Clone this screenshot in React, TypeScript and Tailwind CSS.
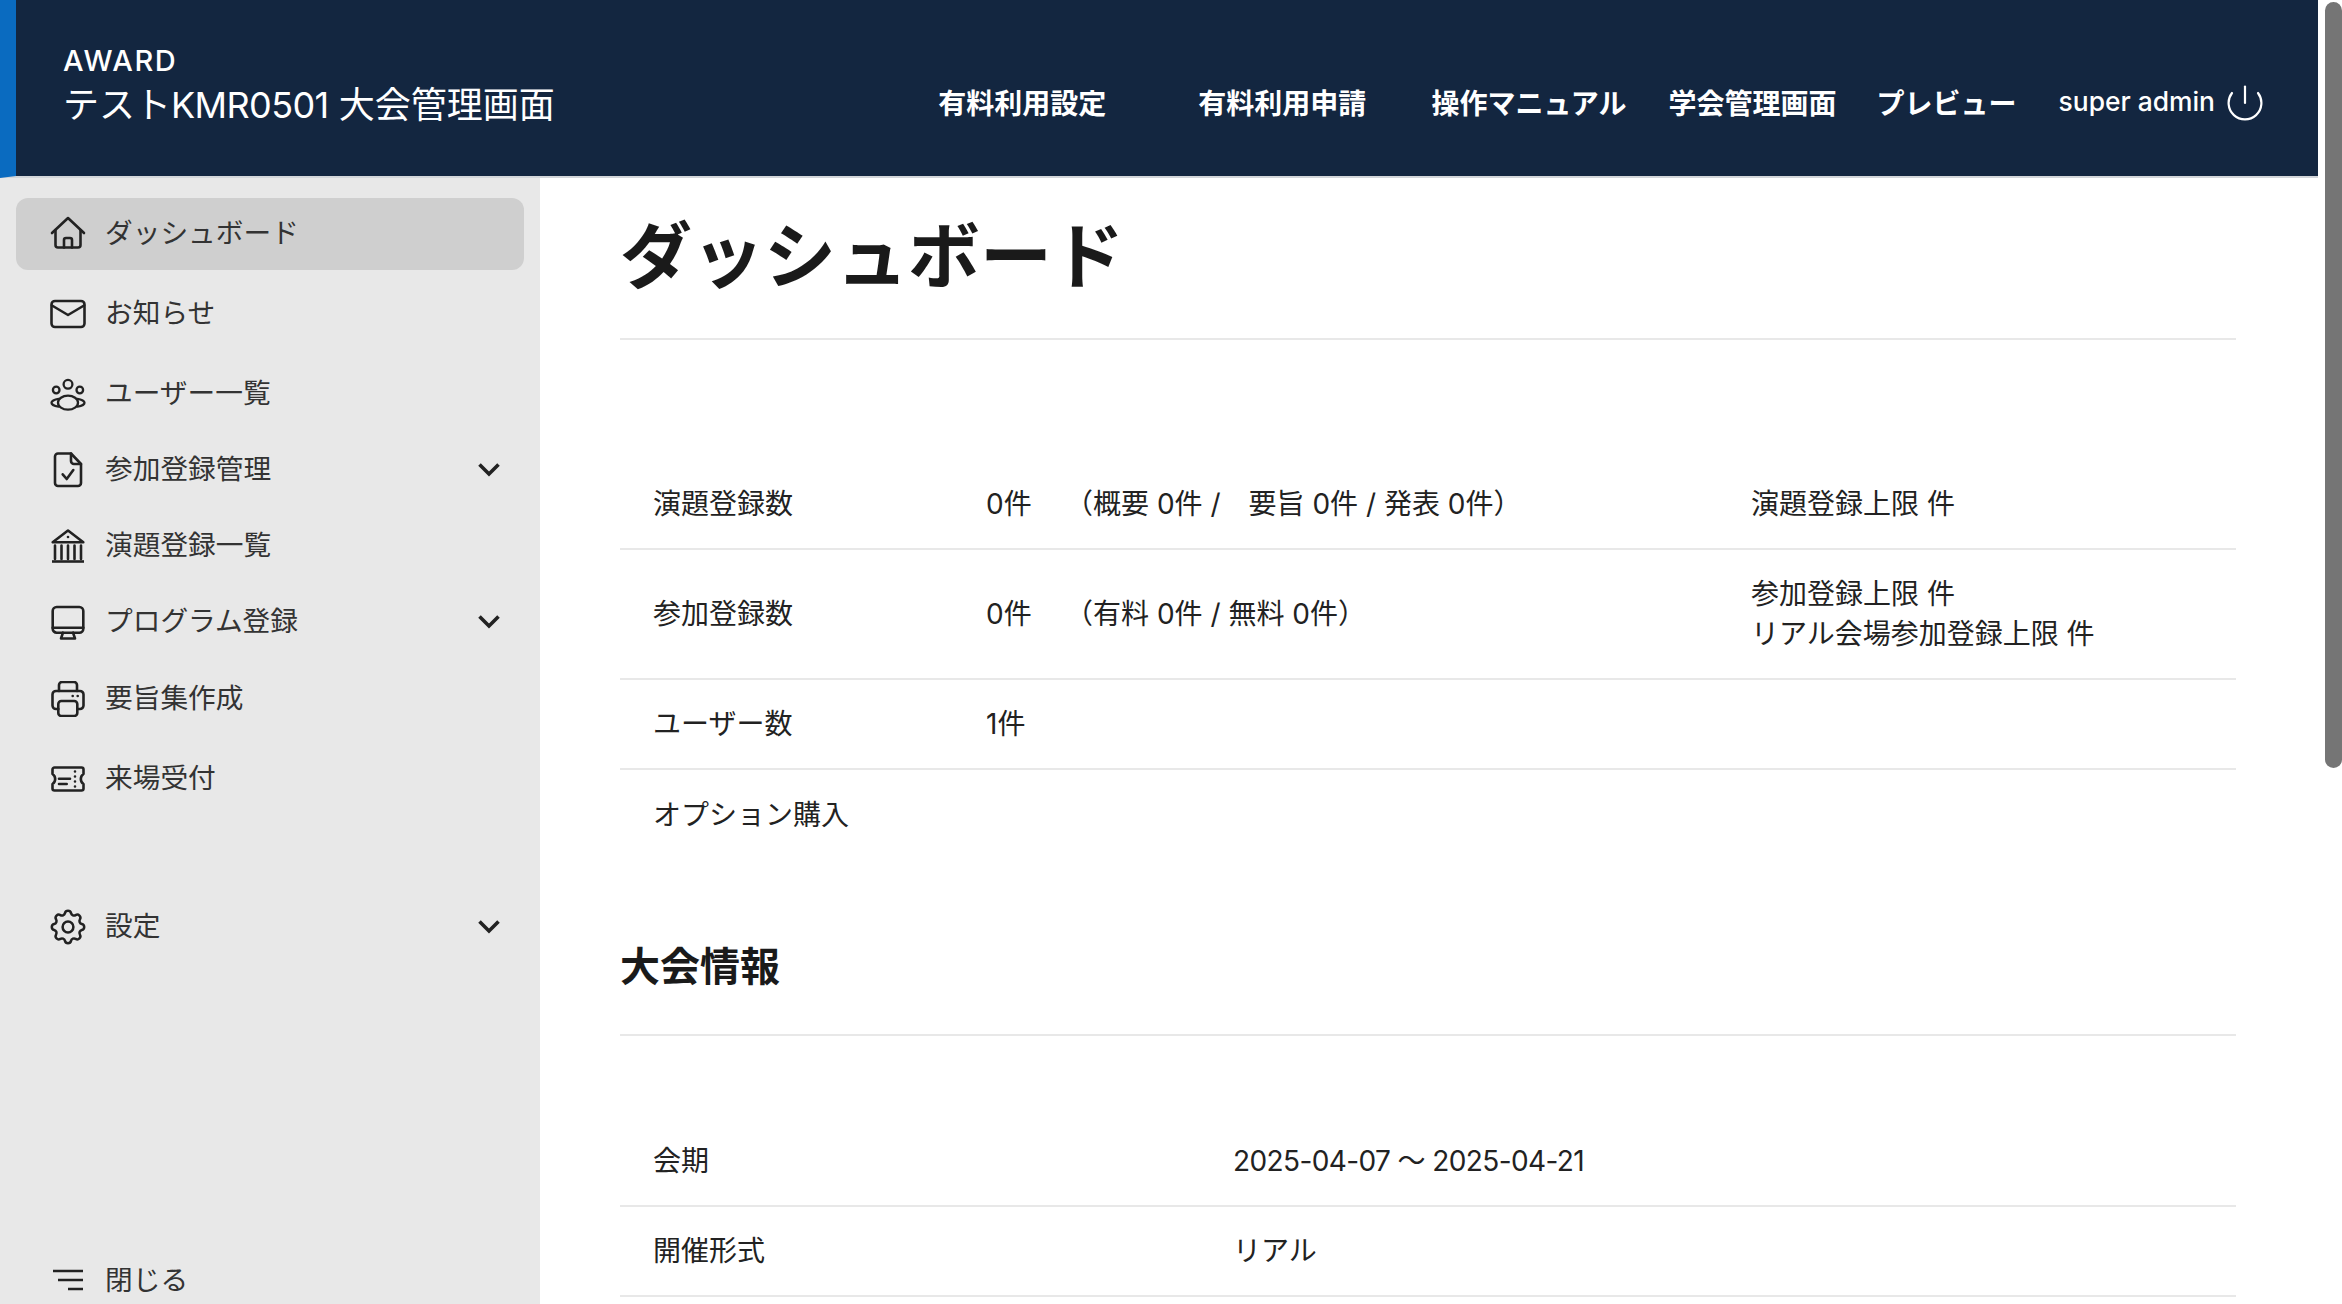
import React from "react";

const Ic = ({ children, sw = 2.6, vb = "0 0 36 36" }: { children: React.ReactNode; sw?: number; vb?: string }) => (
  <svg viewBox={vb} className="w-[36px] h-[36px] shrink-0" fill="none" stroke="#222222" strokeWidth={sw} strokeLinecap="round" strokeLinejoin="round">
    {children}
  </svg>
);

const Chevron = () => (
  <svg viewBox="0 0 24 16" className="w-[24px] h-[16px] shrink-0" fill="none" stroke="#222222" strokeWidth={3.6}>
    <path d="M2.5 2.5L12 12L21.5 2.5" />
  </svg>
);

const icons: Record<string, React.ReactNode> = {
  home: (
    <Ic>
      <path d="M2 17L18 2L34 17" />
      <path d="M5.5 14V29a2.5 2.5 0 0 0 2.5 2.5H28a2.5 2.5 0 0 0 2.5-2.5V14" />
      <path d="M14 31.5V24a2 2 0 0 1 2-2h4a2 2 0 0 1 2 2v7.5" />
    </Ic>
  ),
  mail: (
    <Ic>
      <rect x="1.5" y="5" width="33" height="26" rx="3.5" />
      <path d="M2 9.5L18 19L34 9.5" />
    </Ic>
  ),
  users: (
    <Ic sw={2.3}>
      <circle cx="18" cy="8.3" r="4.4" />
      <circle cx="6.2" cy="14" r="3.3" />
      <circle cx="29.8" cy="14" r="3.3" />
      <ellipse cx="18" cy="26.7" rx="10" ry="7" />
      <path d="M8.5 22.8C4 23.3 1.5 25.3 1.5 26.7C1.5 28.1 4 30 8.5 30.6" />
      <path d="M27.5 22.8C32 23.3 34.5 25.3 34.5 26.7C34.5 28.1 32 30 27.5 30.6" />
    </Ic>
  ),
  file: (
    <Ic>
      <path d="M8 1.5H21L31 12V31a3 3 0 0 1-3 3H8a3 3 0 0 1-3-3V4.5a3 3 0 0 1 3-3Z" />
      <path d="M21 1.5V9a3 3 0 0 0 3 3h7" />
      <path d="M12.7 22.3L16.7 27L23.3 18" />
    </Ic>
  ),
  bank: (
    <Ic>
      <path d="M18 2.5L2.7 14.2H33.3Z" />
      <path d="M18 9v.01" />
      <path d="M5 17.5V31M11.5 17.5V31M18 17.5V31M24.5 17.5V31M31 17.5V31" />
      <path d="M2 33.5H34" strokeLinecap="butt" />
    </Ic>
  ),
  monitor: (
    <Ic>
      <rect x="2.7" y="3" width="30.6" height="25.7" rx="4" />
      <path d="M2.7 23.7H33.3" />
      <path d="M13 28.7L11 34.5H25L23 28.7" />
    </Ic>
  ),
  printer: (
    <Ic>
      <path d="M9 10V4a3 3 0 0 1 3-3h12a3 3 0 0 1 3 3v6" />
      <path d="M8.3 28H6a3.5 3.5 0 0 1-3.5-3.5V13.5A3.5 3.5 0 0 1 6 10h24a3.5 3.5 0 0 1 3.5 3.5v11A3.5 3.5 0 0 1 30 28h-2.3" />
      <rect x="8.3" y="20" width="19" height="15" rx="3" />
      <path d="M22.7 15v.01M27.7 15v.01" />
    </Ic>
  ),
  ticket: (
    <Ic>
      <path d="M4.5 6.5H31.500a2 2 0 0 1 2 2V13a6 6 0 0 0 0 10v4.500a2 2 0 0 1-2 2H4.500a2 2 0 0 1-2-2V23a6 6 0 0 0 0-10V8.500a2 2 0 0 1 2-2Z" />
      <path d="M9 17.7H20M9 23H16.700" />
      <path d="M25 10.500v.01M25 15.500v.01M25 20.500v.01M25 25.500v.01" />
    </Ic>
  ),
  gear: (
    <Ic sw={1.4} vb="2 2 20 20">
      <path d="M10.325 4.317c.426 -1.756 2.924 -1.756 3.35 0a1.724 1.724 0 0 0 2.573 1.066c1.543 -.94 3.31 .826 2.37 2.37a1.724 1.724 0 0 0 1.065 2.572c1.756 .426 1.756 2.924 0 3.35a1.724 1.724 0 0 0 -1.066 2.573c.94 1.543 -.826 3.31 -2.37 2.37a1.724 1.724 0 0 0 -2.572 1.065c-.426 1.756 -2.924 1.756 -3.35 0a1.724 1.724 0 0 0 -2.573 -1.066c-1.543 .94 -3.31 -.826 -2.37 -2.37a1.724 1.724 0 0 0 -1.065 -2.572c-1.756 -.426 -1.756 -2.924 0 -3.35a1.724 1.724 0 0 0 1.066 -2.573c-.94 -1.543 .826 -3.31 2.37 -2.37c1 .608 2.296 .07 2.572 -1.065z" />
      <circle cx="12" cy="12" r="3" />
    </Ic>
  ),
  menu: (
    <Ic>
      <path d="M3 8H33M8 17H33M18 26H33" strokeLinecap="butt" />
    </Ic>
  ),
};

const Item = ({ icon, label, chevron, active, className }: { icon: string; label: string; chevron?: boolean; active?: boolean; className?: string }) => (
  <div className={`flex items-center shrink-0 h-[72px] pl-[34px] pr-[23px] rounded-[12px] gap-[19px] ${active ? "bg-[#cfcfcf]" : ""} ${className ?? ""}`}>
    {icons[icon]}
    <span className="flex-1 text-[27.7px] text-[#333333]">{label}</span>
    {chevron ? <Chevron /> : null}
  </div>
);

const NavLink = ({ children, className }: { children: React.ReactNode; className?: string }) => (
  <a className={`text-[28px] font-bold text-white whitespace-nowrap ${className ?? ""}`}>{children}</a>
);

const rowCls = "grid items-center border-b-2 border-[#e8e8e8] text-[28px] text-[#222222] leading-[40px]";

export default function App() {
  return (
    <div className="flex h-[1304px] w-full overflow-hidden bg-white font-['Inter','Noto_Sans_CJK_JP',sans-serif]">
      <div className="flex flex-col w-[2318px] shrink-0">
        <header className="flex items-center h-[178px] shrink-0 bg-[#132640] border-l-[16px] border-l-[#0a6bc0] border-b-2 border-b-[#d3d6da] pl-[47px] pr-[55px]">
          <div className="flex flex-col -mt-[2px]">
            <span className="text-[29px] leading-[34px] font-medium text-white tracking-[1.6px]">AWARD</span>
            <span className="text-[36px] leading-[50px] text-white whitespace-nowrap mt-[2px]">
              テスト<span className="tracking-[-0.6px]">KMR0501</span> 大会管理画面
            </span>
          </div>
          <nav className="ml-auto flex items-center mt-[31px]">
            <NavLink>有料利用設定</NavLink>
            <NavLink className="ml-[92px]">有料利用申請</NavLink>
            <NavLink className="ml-[65px]">操作マニュアル</NavLink>
            <NavLink className="ml-[42px]">学会管理画面</NavLink>
            <NavLink className="ml-[40px]">プレビュー</NavLink>
            <span className="ml-[42px] text-[26.4px] font-medium text-white whitespace-nowrap -mt-[4px]">super admin</span>
            <svg viewBox="0 0 36 36" className="ml-[12px] -mt-[2px] w-[36px] h-[36px]" fill="none" stroke="#ffffff" strokeWidth={2.2} strokeLinecap="round">
              <path d="M5 8A16.4 16.4 0 1 0 31 8" />
              <path d="M18 1.5V18" />
            </svg>
          </nav>
        </header>

        <div className="flex flex-1 min-h-0">
          <aside className="flex flex-col w-[540px] shrink-0 overflow-hidden bg-[#e8e8e8] pl-[16px] pr-[16px] pt-[20px]">
            <Item icon="home" label="ダッシュボード" active />
            <Item icon="mail" label="お知らせ" className="mt-[8px]" />
            <Item icon="users" label="ユーザー一覧" className="mt-[8px]" />
            <Item icon="file" label="参加登録管理" chevron className="mt-[4px]" />
            <Item icon="bank" label="演題登録一覧" className="mt-[4px]" />
            <Item icon="monitor" label="プログラム登録" chevron className="mt-[4px]" />
            <Item icon="printer" label="要旨集作成" className="mt-[5px]" />
            <Item icon="ticket" label="来場受付" className="mt-[8px]" />
            <Item icon="gear" label="設定" chevron className="mt-[76px]" />
            <Item icon="menu" label="閉じる" className="mt-[282px]" />
          </aside>

          <main className="flex-1 min-w-0 overflow-hidden pl-[80px] pr-[82px]">
            <div className="h-[162px] border-b-2 border-[#e8e8e8]">
              <h1 className="pt-[34px] text-[72px] leading-[88px] font-bold text-[#1a1a1a] whitespace-nowrap">ダッシュボード</h1>
            </div>

            <section className="mt-[120px]">
              <div className={`${rowCls} grid-cols-[333px_765px_1fr] h-[90px]`}>
                <div className="pl-[33px]">演題登録数</div>
                <div className="pl-[33px] flex whitespace-nowrap">
                  <span className="w-[79px]">0件</span>
                  <span>（概要 0件 /　要旨 0件 / 発表 0件）</span>
                </div>
                <div className="pl-[33px]">演題登録上限 件</div>
              </div>
              <div className={`${rowCls} grid-cols-[333px_765px_1fr] h-[130px]`}>
                <div className="pl-[33px]">参加登録数</div>
                <div className="pl-[33px] flex whitespace-nowrap">
                  <span className="w-[79px]">0件</span>
                  <span>（有料 0件 / 無料 0件）</span>
                </div>
                <div className="pl-[33px]">
                  <div>参加登録上限 件</div>
                  <div>リアル会場参加登録上限 件</div>
                </div>
              </div>
              <div className={`${rowCls} grid-cols-[333px_765px_1fr] h-[90px]`}>
                <div className="pl-[33px]">ユーザー数</div>
                <div className="pl-[33px]">1件</div>
                <div />
              </div>
              <div className="grid items-center grid-cols-[333px_765px_1fr] h-[90px] text-[28px] text-[#222222] leading-[40px]">
                <div className="pl-[33px] whitespace-nowrap">オプション購入</div>
                <div />
                <div />
              </div>
            </section>

            <div className="mt-[60px] h-[116px] border-b-2 border-[#e8e8e8]">
              <h2 className="pt-[19px] text-[40px] leading-[56px] font-bold text-[#1a1a1a]">大会情報</h2>
            </div>

            <section className="mt-[81px]">
              <div className={`${rowCls} grid-cols-[580px_1fr] h-[90px]`}>
                <div className="pl-[33px]">会期</div>
                <div className="pl-[33px] tracking-[-0.6px]">2025-04-07 ～ 2025-04-21</div>
              </div>
              <div className={`${rowCls} grid-cols-[580px_1fr] h-[90px]`}>
                <div className="pl-[33px]">開催形式</div>
                <div className="pl-[33px]">リアル</div>
              </div>
            </section>
          </main>
        </div>
      </div>

      <div className="flex-1 bg-white pl-[7px] pt-[2px]">
        <div className="h-[766px] w-full rounded-full bg-[#757575]" />
      </div>
    </div>
  );
}
